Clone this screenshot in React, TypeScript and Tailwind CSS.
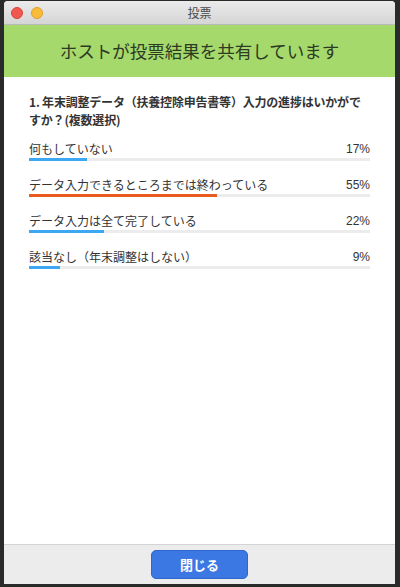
import React from "react";

const options = [
  { label: "何もしていない", pct: 17, top: true },
  { label: "データ入力できるところまでは終わっている", pct: 55, top: false },
  { label: "データ入力は全て完了している", pct: 22, top: true },
  { label: "該当なし（年末調整はしない）", pct: 9, top: true },
];

export default function App() {
  return (
    <div
      className="w-[400px] h-[587px] bg-[#2a2a2a] pl-[4px] pr-[5px] pt-[1px] pb-[3px] flex"
      style={{ fontFamily: '"Noto Sans CJK JP", "Noto Sans", sans-serif' }}
    >
      <div className="flex-1 flex flex-col bg-white rounded-t-[4px] overflow-hidden">
        {/* title bar */}
        <div className="relative h-[24px] shrink-0 bg-gradient-to-b from-[#ebebeb] to-[#d5d5d5] border-b border-[#b9b9b9] flex items-center justify-center">
          <div className="absolute left-[7px] top-[6px] flex gap-[8px]">
            <span className="w-[12px] h-[12px] rounded-full bg-[#f0574d] border border-[#d9443a]" />
            <span className="w-[12px] h-[12px] rounded-full bg-[#f8bb3a] border border-[#dea02a]" />
          </div>
          <span className="text-[12px] text-[#4a4a4a] leading-none">投票</span>
        </div>

        {/* banner */}
        <div className="h-[52px] shrink-0 bg-[#a6d96b] flex items-center justify-center">
          <span className="text-[17.5px] text-[#2d3a24] leading-none">ホストが投票結果を共有しています</span>
        </div>

        {/* content */}
        <div className="flex-1 px-[25px] pt-[16px]">
          <p className="text-[12px] font-bold text-[#333] leading-[18px] tracking-[-0.2px]">
            1. 年末調整データ（扶養控除申告書等）入力の進捗はいかがですか？(複数選択)
          </p>
          <div className="mt-[13px] flex flex-col gap-[17px]">
            {options.map((o) => (
              <div key={o.label}>
                <div className="flex items-end justify-between text-[12px] text-[#333] leading-[14px]">
                  <span>{o.label}</span>
                  <span style={{ fontFamily: '"Liberation Sans", sans-serif' }}>{o.pct}%</span>
                </div>
                <div className="mt-[2px] h-[3px] bg-[#ececec]">
                  <div
                    className={o.top ? "h-full bg-[#3ca7f3]" : "h-full bg-[#e85a1e]"}
                    style={{ width: `${o.pct}%` }}
                  />
                </div>
              </div>
            ))}
          </div>
        </div>

        {/* footer */}
        <div className="h-[40px] shrink-0 bg-[#ececec] border-t border-[#d4d4d4] flex items-center justify-center">
          <button className="w-[97px] h-[29px] rounded-[5px] bg-[#3b78e3] border border-[#2f66cf] text-white text-[13px] font-bold">
            閉じる
          </button>
        </div>
      </div>
    </div>
  );
}
